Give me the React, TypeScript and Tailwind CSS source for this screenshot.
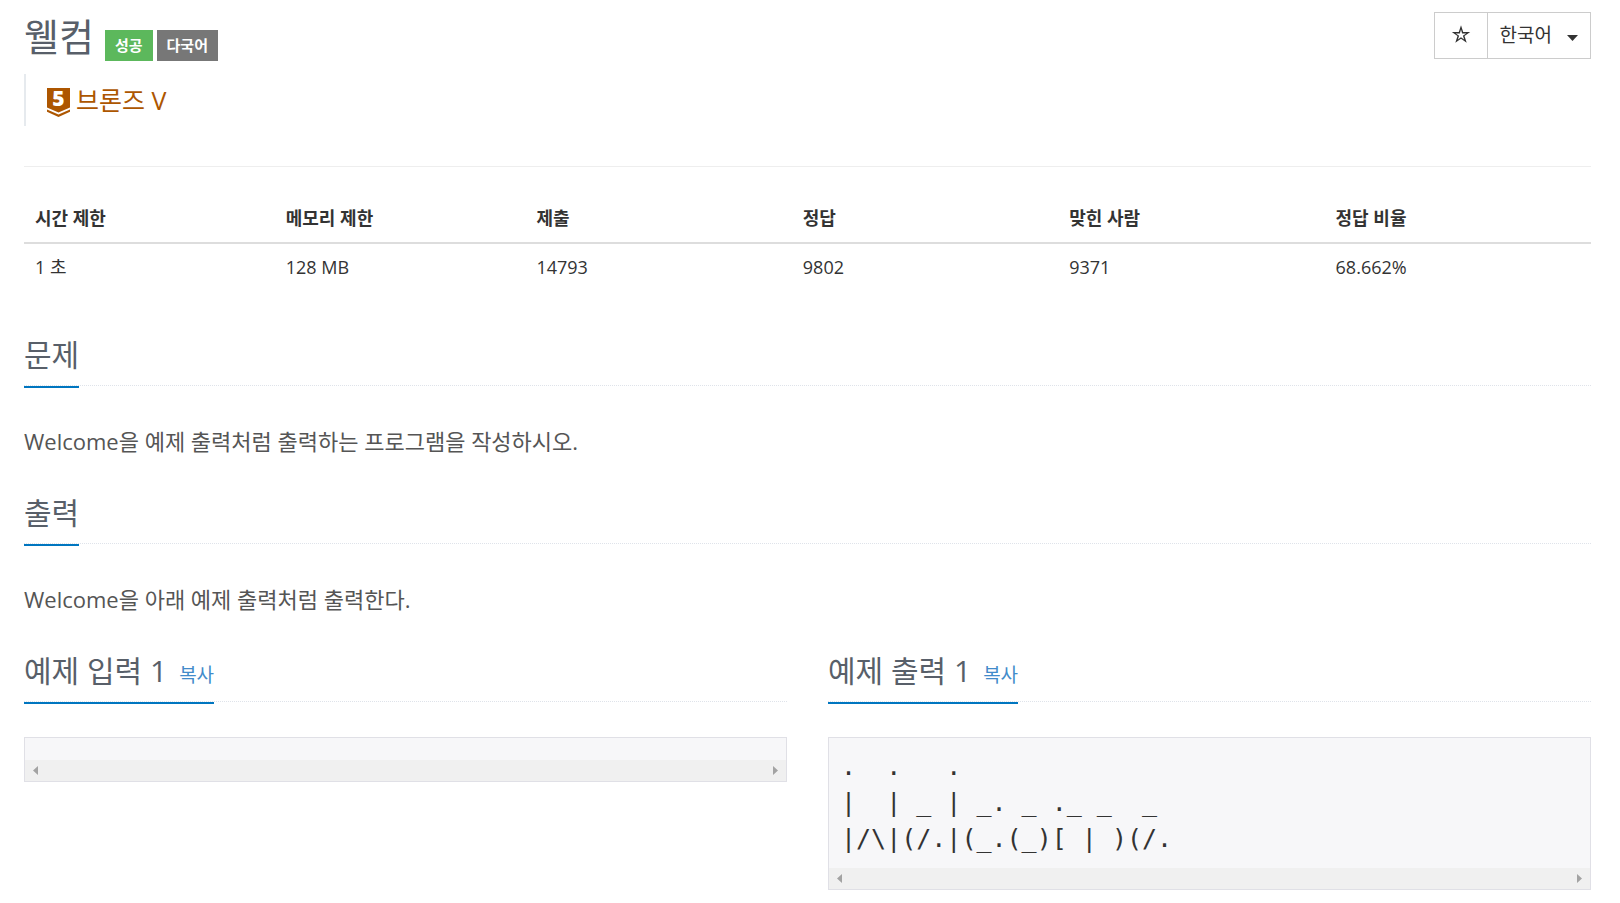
import type { ReactNode } from 'react'

const columns = [
  { label: '시간 제한', value: '1 초', width: 'w-[16%]' },
  { label: '메모리 제한', value: '128 MB', width: 'w-[16%]' },
  { label: '제출', value: '14793', width: 'w-[17%]' },
  { label: '정답', value: '9802', width: 'w-[17%]' },
  { label: '맞힌 사람', value: '9371', width: 'w-[17%]' },
  { label: '정답 비율', value: '68.662%', width: 'w-[17%]' },
]

const sampleOutput = `.  .   .
|  | _ | _. _ ._ _  _
|/\\|(/.|(_.(_)[ | )(/.`

const TierIcon = () => (
  <svg viewBox="0 0 23 29" className="w-[23px] h-[29px] mt-1 overflow-visible" aria-hidden="true">
    <path d="M0 0h23v19.500l-11.500 5L0 19.500z" fill="#ad5600" />
    <path d="M0 21.500l11.500 5 11.500-5v2.300L11.500 29 0 23.800z" fill="#ad5600" />
    <text x="11.500" y="18" textAnchor="middle" fontSize="21" fontWeight="800" fill="#fff">5</text>
  </svg>
)

const SectionHeading = ({ children }: { children: ReactNode }) => (
  <div className="flex border-b border-dotted border-[#dfe3ea]">
    <h2 className="flex items-baseline gap-3 pb-[11px] -mb-[3px] border-b-2 border-[#0076c0] text-[30px] leading-10 text-[#585f69]">
      {children}
    </h2>
  </div>
)

const CodeBox = ({ children }: { children?: string }) => (
  <div className="mt-[35px] border border-[#e0e0e6] bg-[#f7f7f9]">
    <pre className="px-3 py-[11px] font-['DejaVu_Sans_Mono','Noto_Sans_CJK_KR',monospace] text-[25px] leading-9 text-[#333]">
      {children}
    </pre>
    <div className="flex items-center justify-between h-[21px] px-2 bg-[#f0f0f0]">
      <svg viewBox="0 0 5 9" className="w-[5px] h-[9px]" aria-hidden="true">
        <path d="M5 0v9L0 4.500z" fill="#a3a3a3" />
      </svg>
      <svg viewBox="0 0 5 9" className="w-[5px] h-[9px]" aria-hidden="true">
        <path d="M0 0v9l5-4.500z" fill="#a3a3a3" />
      </svg>
    </div>
  </div>
)

const Sample = ({ title, children }: { title: string; children?: string }) => (
  <section>
    <SectionHeading>
      {title}
      <a href="#copy" className="text-[19px] leading-6 text-[#428bca]">복사</a>
    </SectionHeading>
    <CodeBox>{children}</CodeBox>
  </section>
)

export default function App() {
  return (
    <main className="pl-6 pr-[29px] pt-3 pb-3 bg-white font-['Open_Sans','Noto_Sans_CJK_KR',sans-serif] text-lg text-[#333]">
      {/* 제목 */}
      <header className="flex items-start justify-between">
        <div className="flex items-end">
          <h1 className="text-[38px] leading-[49px] text-[#585f69]">웰컴</h1>
          <div className="flex gap-1 ml-[11px]">
            <span className="px-[10px] text-[15px] leading-[31px] font-bold text-white bg-[#5cb85c]">성공</span>
            <span className="px-[10px] text-[15px] leading-[31px] font-bold text-white bg-[#777]">다국어</span>
          </div>
        </div>
        <div className="flex h-[47px] border border-[#ccc] text-[19px]">
          <button type="button" aria-label="즐겨찾기" className="flex items-center justify-center w-[52px]">
            <svg viewBox="0 0 20 20" className="w-5 h-5 mb-0.5" aria-hidden="true">
              <path
                d="M10 .3l2.200 6.700h7l-5.700 4.100 2.200 6.700-5.700-4.100-5.700 4.100 2.200-6.700L.8 7h7zM10 4.500L8.900 8.500H4.800l3.300 2.300-1.200 3.700L10 12.200l3.100 2.300-1.200-3.700 3.300-2.300h-4.100z"
                fill="#333"
                fillRule="evenodd"
              />
            </svg>
          </button>
          <button type="button" className="flex items-center gap-[15px] px-3 border-l border-[#ccc]">
            한국어
            <svg viewBox="0 0 11 6" className="w-[11px] h-[6px] mt-1" aria-hidden="true">
              <path d="M0 0h11L5.500 6z" fill="#333" />
            </svg>
          </button>
        </div>
      </header>

      <blockquote className="flex items-center gap-[6px] h-[52px] mt-[13px] pl-[21px] border-l-2 border-[#e6eaee] text-[25px] text-[#ad5600]">
        <TierIcon />
        브론즈 V
      </blockquote>

      <hr className="mt-10 border-[#eee]" />

      {/* 문제 정보 */}
      <table className="w-full mt-[27px] table-fixed text-left">
        <thead>
          <tr className="border-b-2 border-[#ddd]">
            {columns.map((column) => (
              <th key={column.label} className={`${column.width} px-[11px] py-[10px] leading-7 font-bold`}>
                {column.label}
              </th>
            ))}
          </tr>
        </thead>
        <tbody>
          <tr>
            {columns.map((column) => (
              <td key={column.label} className="px-[11px] py-[9px] leading-7">
                {column.value}
              </td>
            ))}
          </tr>
        </tbody>
      </table>

      <section className="mt-[45px]">
        <SectionHeading>문제</SectionHeading>
        <p className="mt-[39px] text-[22px] leading-8 text-[#555]">
          Welcome을 예제 출력처럼 출력하는 프로그램을 작성하시오.
        </p>
      </section>

      <section className="mt-9">
        <SectionHeading>출력</SectionHeading>
        <p className="mt-[39px] text-[22px] leading-8 text-[#555]">
          Welcome을 아래 예제 출력처럼 출력한다.
        </p>
      </section>

      <div className="grid grid-cols-2 gap-[41px] mt-9">
        <Sample title="예제 입력 1" />
        <Sample title="예제 출력 1">{sampleOutput}</Sample>
      </div>
    </main>
  )
}
